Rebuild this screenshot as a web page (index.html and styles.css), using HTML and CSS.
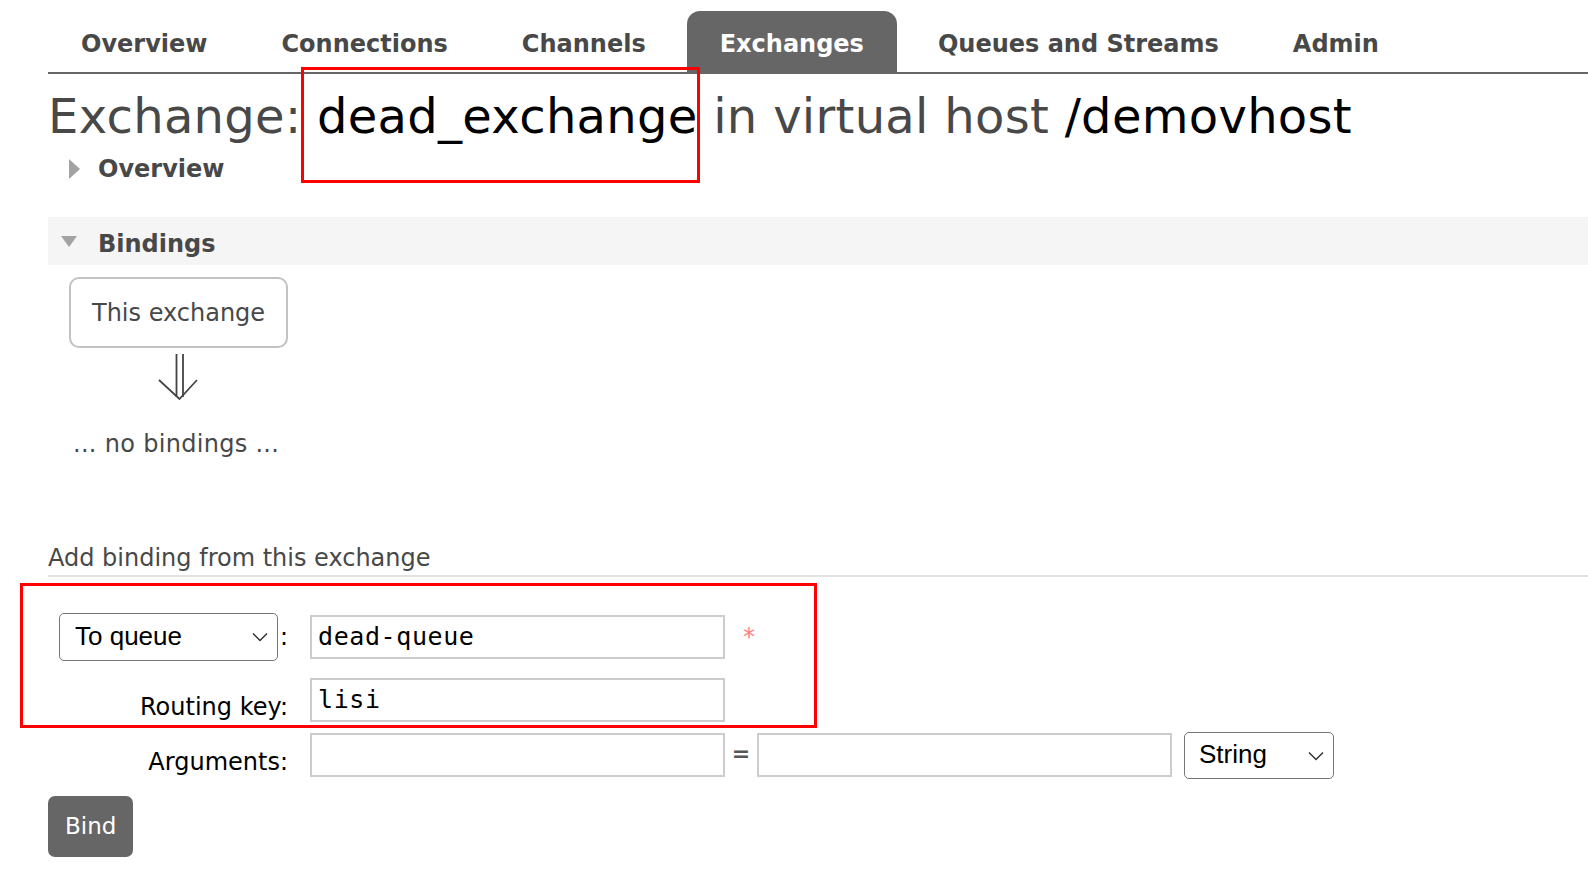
FILE: index.html
```html
<!DOCTYPE html>
<html lang="en">
<head>
<meta charset="utf-8">
<title>Exchange: dead_exchange</title>
<link rel="stylesheet" href="styles.css">
</head>
<body>
<div class="page">
  <nav class="menu">
    <ul>
      <li><a>Overview</a></li>
      <li><a>Connections</a></li>
      <li><a>Channels</a></li>
      <li class="active"><a>Exchanges</a></li>
      <li><a>Queues and Streams</a></li>
      <li><a>Admin</a></li>
    </ul>
  </nav>

  <h1 class="title">Exchange: <b>dead_exchange</b> in virtual host <b>/demovhost</b></h1>

  <h2 class="section-head">
    <span class="slot"><span class="tri-right"></span></span>Overview
  </h2>

  <h2 class="section-head bar">
    <span class="slot"><span class="tri-down"></span></span>Bindings
  </h2>

  <div class="bindings">
    <div class="this-ex">This exchange</div>
    <svg class="arrow" width="40" height="48" viewBox="0 0 40 48">
      <path d="M18.5 1 V44 M25 1 V44" stroke="#444" stroke-width="1.8" fill="none"/>
      <path d="M1 27 L21.5 46 L39 27" stroke="#444" stroke-width="1.8" fill="none"/>
    </svg>
    <p class="none">... no bindings ...</p>
  </div>

  <h3 class="add-head">Add binding from this exchange</h3>

  <div class="form">
    <div class="row row1">
      <div class="lab">
        <div class="select sel-dest">
          <span>To queue</span>
          <svg width="16" height="10" viewBox="0 0 16 10"><path d="M1 1.5 L8 8.5 L15 1.5" stroke="#333" stroke-width="1.5" fill="none"/></svg>
        </div>
        <span class="colon">:</span>
      </div>
      <div class="fields">
        <div class="input">dead-queue</div>
        <span class="req">*</span>
      </div>
    </div>

    <div class="row row2">
      <div class="lab text">Routing key:</div>
      <div class="fields">
        <div class="input">lisi</div>
      </div>
    </div>

    <div class="row row3">
      <div class="lab text">Arguments:</div>
      <div class="fields">
        <div class="input"></div>
        <span class="eq">=</span>
        <div class="input"></div>
        <div class="select sel-type">
          <span>String</span>
          <svg width="16" height="10" viewBox="0 0 16 10"><path d="M1 1.5 L8 8.5 L15 1.5" stroke="#333" stroke-width="1.5" fill="none"/></svg>
        </div>
      </div>
    </div>

    <button class="bind" type="button">Bind</button>
  </div>
</div>

<div class="annot annot-name"></div>
<div class="annot annot-form"></div>
</body>
</html>
```

FILE: styles.css
```css
html, body {
  margin: 0;
  padding: 0;
  background: #fff;
}

body {
  position: relative;
  font-family: "DejaVu Sans", Verdana, sans-serif;
  font-size: 24px;
  color: #484848;
}

.page {
  padding-left: 48px;
}

/* ---------- menu ---------- */
.menu ul {
  display: flex;
  margin: 0;
  padding: 11px 0 0 0;
  list-style: none;
  border-bottom: 2px solid #666;
}

.menu li {
  margin-right: 8px;
}

.menu a {
  display: block;
  padding: 5px 33px 0;
  line-height: 56px;
  font-weight: bold;
  font-size: 24px;
  color: #484848;
  border-radius: 13px 13px 0 0;
}

.menu .active a {
  background: #666;
  color: #fff;
}

/* ---------- title ---------- */
.title {
  margin: 14px 0 0;
  font-size: 48px;
  line-height: 56px;
  font-weight: normal;
  letter-spacing: 0.3px;
  color: #484848;
  white-space: nowrap;
}

.title b {
  font-weight: normal;
  color: #000;
}

/* ---------- section headings ---------- */
.section-head {
  display: flex;
  align-items: center;
  margin: 10px 0 0;
  font-size: 24px;
  line-height: 30px;
  font-weight: bold;
  color: #484848;
}

.section-head .slot {
  display: flex;
  align-items: center;
  width: 50px;
  flex: none;
}

.tri-right {
  width: 0;
  height: 0;
  margin-left: 21px;
  border-top: 10px solid transparent;
  border-bottom: 10px solid transparent;
  border-left: 11px solid #a3a3a3;
}

.section-head.bar {
  margin-top: 33px;
  padding-top: 6px;
  line-height: 42px;
  background: #f5f5f5;
}

.tri-down {
  width: 0;
  height: 0;
  margin-left: 13px;
  margin-top: -6px;
  border-left: 8px solid transparent;
  border-right: 8px solid transparent;
  border-top: 11px solid #a3a3a3;
}

/* ---------- bindings ---------- */
.bindings {
  display: flex;
  flex-direction: column;
  align-items: flex-start;
}

.this-ex {
  margin: 12px 0 0 21px;
  padding: 1px 21px 0;
  line-height: 66px;
  border: 2px solid #c2c2c2;
  border-radius: 10px;
  color: #484848;
}

.arrow {
  display: block;
  margin: 5px 0 0 110px;
}

.none {
  margin: 29px 0 0 25px;
  line-height: 28px;
  letter-spacing: 0.3px;
  color: #484848;
}

/* ---------- add binding ---------- */
.add-head {
  margin: 86px 0 0;
  padding-bottom: 3px;
  font-size: 24px;
  line-height: 28px;
  font-weight: normal;
  color: #484848;
  border-bottom: 2px solid #e2e2e2;
}

.form {
  display: flex;
  flex-direction: column;
  align-items: flex-start;
  padding-top: 36px;
}

.row {
  display: grid;
  grid-template-columns: 240px auto;
  column-gap: 22px;
  align-items: start;
}

.row1 {
  align-items: center;
}

.row2 {
  margin-top: 17px;
}

.row3 {
  margin-top: 11px;
}

.lab {
  display: flex;
  justify-content: flex-end;
  align-items: center;
}

.lab.text {
  padding-top: 15px;
  line-height: 28px;
  color: #000;
}

.colon {
  margin-left: 2px;
  line-height: 28px;
  color: #000;
  width: 8px;
}

.fields {
  display: flex;
  align-items: center;
}

.row3 .fields {
  align-items: flex-start;
}

.input {
  box-sizing: border-box;
  width: 415px;
  height: 44px;
  padding: 0 6px;
  border: 2px solid #cccccc;
  font-family: "DejaVu Sans Mono", Menlo, monospace;
  font-size: 25px;
  letter-spacing: 0.6px;
  line-height: 40px;
  color: #000;
  white-space: pre;
}

.req {
  margin-left: 18px;
  color: #ff8080;
  font-size: 24px;
  line-height: 28px;
}

.eq {
  width: 32px;
  text-align: center;
  line-height: 42px;
  color: #555;
  font-weight: bold;
  font-size: 22px;
}

.select {
  box-sizing: border-box;
  display: flex;
  align-items: center;
  justify-content: space-between;
  border: 1.5px solid #767676;
  border-radius: 5px;
  font-family: "Liberation Sans", Arial, sans-serif;
  font-size: 26px;
  color: #000;
  background: #fff;
}

.sel-dest {
  width: 219px;
  height: 48px;
  padding: 0 9px 2px 15px;
}

.sel-type {
  width: 150px;
  height: 47px;
  margin: -1px 0 0 12px;
  padding: 0 9px 2px 14px;
}

.select svg {
  display: block;
  margin-top: 2px;
}

.bind {
  margin-top: 17px;
  height: 61px;
  padding: 0 17px;
  border: none;
  border-radius: 7px;
  background: #666;
  color: #fff;
  font-family: "DejaVu Sans", Verdana, sans-serif;
  font-size: 23px;
  line-height: 61px;
}

/* ---------- annotation overlays ---------- */
.annot {
  position: absolute;
  box-sizing: border-box;
  border: 3px solid #ff0000;
  pointer-events: none;
}

.annot-name {
  left: 301px;
  top: 67px;
  width: 399px;
  height: 116px;
}

.annot-form {
  left: 20px;
  top: 583px;
  width: 797px;
  height: 145px;
}
```
